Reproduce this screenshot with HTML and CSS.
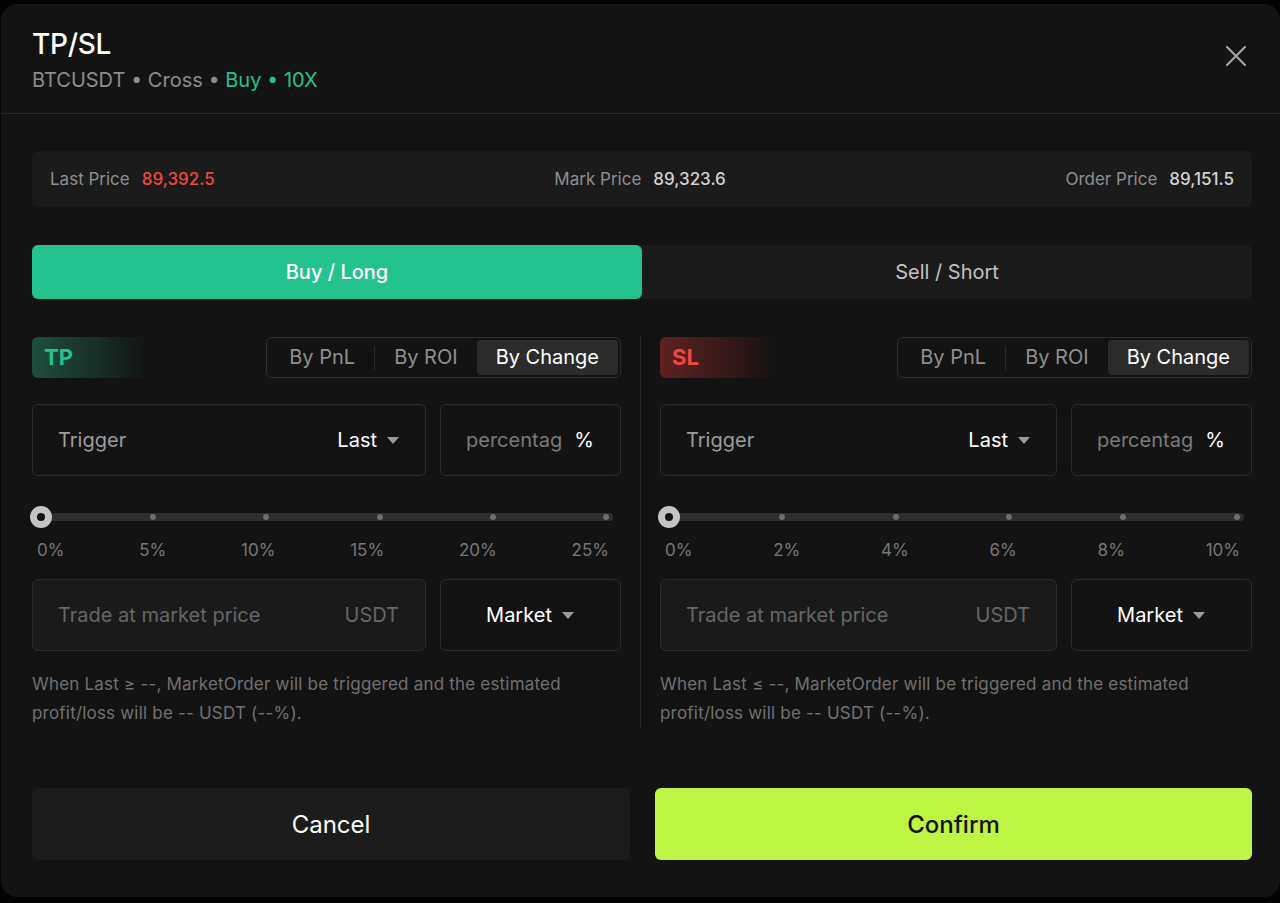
FILE: index.html
```html
<!DOCTYPE html>
<html lang="en">
<head>
    <meta charset="UTF-8">
    <meta name="viewport" content="width=device-width, initial-scale=1.0">
    <title>TP/SL</title>
    <link rel="stylesheet" href="styles.css">
</head>
<body>
    <div class="modal">
        <div class="modal-head">
            <div>
                <h1 class="title">TP/SL</h1>
                <p class="subtitle">BTCUSDT • Cross • <span class="up">Buy • 10X</span></p>
            </div>
            <button class="close" aria-label="Close">
                <svg width="22" height="22" viewBox="0 0 22 22"><path d="M2 2 L20 20 M20 2 L2 20" stroke="#a3a3a3" stroke-width="2.2" stroke-linecap="round"/></svg>
            </button>
        </div>

        <div class="modal-body">
            <!-- prices -->
            <div class="price-bar">
                <div class="price"><span class="label">Last Price</span><span class="value down">89,392.5</span></div>
                <div class="price"><span class="label">Mark Price</span><span class="value">89,323.6</span></div>
                <div class="price"><span class="label">Order Price</span><span class="value">89,151.5</span></div>
            </div>

            <div class="side-tabs">
                <button class="side active">Buy / Long</button>
                <button class="side">Sell / Short</button>
            </div>

            <div class="columns">
                <!-- take profit -->
                <div class="col">
                    <div class="col-head">
                        <span class="tag tag-tp">TP</span>
                        <div class="segment">
                            <span class="seg-item">By PnL</span>
                            <span class="seg-sep"></span>
                            <span class="seg-item">By ROI</span>
                            <span class="seg-item active">By Change</span>
                        </div>
                    </div>
                    <div class="field-row">
                        <div class="field">
                            <span class="muted">Trigger</span>
                            <span class="select">Last <i class="caret"></i></span>
                        </div>
                        <div class="field">
                            <input class="pct-input" type="text" placeholder="percentage">
                            <span class="unit">%</span>
                        </div>
                    </div>
                    <div class="slider">
                        <div class="track">
                            <i class="dot"></i><i class="dot"></i><i class="dot"></i><i class="dot"></i><i class="dot"></i><i class="dot"></i>
                            <span class="knob"></span>
                        </div>
                    </div>
                    <div class="ticks"><span>0%</span><span>5%</span><span>10%</span><span>15%</span><span>20%</span><span>25%</span></div>
                    <div class="field-row">
                        <div class="field filled">
                            <span class="placeholder">Trade at market price</span>
                            <span class="placeholder">USDT</span>
                        </div>
                        <div class="field center">
                            <span class="select">Market <i class="caret"></i></span>
                        </div>
                    </div>
                    <p class="note">When Last ≥ --, MarketOrder will be triggered and the estimated profit/loss will be -- USDT (--%).</p>
                </div>

                <div class="col-divider"></div>

                <!-- stop loss -->
                <div class="col">
                    <div class="col-head">
                        <span class="tag tag-sl">SL</span>
                        <div class="segment">
                            <span class="seg-item">By PnL</span>
                            <span class="seg-sep"></span>
                            <span class="seg-item">By ROI</span>
                            <span class="seg-item active">By Change</span>
                        </div>
                    </div>
                    <div class="field-row">
                        <div class="field">
                            <span class="muted">Trigger</span>
                            <span class="select">Last <i class="caret"></i></span>
                        </div>
                        <div class="field">
                            <input class="pct-input" type="text" placeholder="percentage">
                            <span class="unit">%</span>
                        </div>
                    </div>
                    <div class="slider">
                        <div class="track">
                            <i class="dot"></i><i class="dot"></i><i class="dot"></i><i class="dot"></i><i class="dot"></i><i class="dot"></i>
                            <span class="knob"></span>
                        </div>
                    </div>
                    <div class="ticks"><span>0%</span><span>2%</span><span>4%</span><span>6%</span><span>8%</span><span>10%</span></div>
                    <div class="field-row">
                        <div class="field filled">
                            <span class="placeholder">Trade at market price</span>
                            <span class="placeholder">USDT</span>
                        </div>
                        <div class="field center">
                            <span class="select">Market <i class="caret"></i></span>
                        </div>
                    </div>
                    <p class="note">When Last ≤ --, MarketOrder will be triggered and the estimated profit/loss will be -- USDT (--%).</p>
                </div>
            </div>

            <div class="actions">
                <button class="btn btn-cancel">Cancel</button>
                <button class="btn btn-confirm">Confirm</button>
            </div>
        </div>
    </div>
</body>
</html>
```

FILE: styles.css
```css
/* TP/SL dialog, dark theme */
* { box-sizing: border-box; }
body { margin: 0; background-color: #030303; font-family: Inter, Roboto, sans-serif; color: #fff; }
button { font-family: inherit; border: none; cursor: pointer; }

.modal { width: 1279px; height: 893px; margin: 4px 0 0 1px; background-color: #131313; border-radius: 16px; overflow: hidden; }

.modal-head { height: 110px; padding: 22px 33px 0 31px; border-bottom: 1px solid #272727; display: flex; justify-content: space-between; }
.title { margin: 0; font-size: 28px; line-height: 36px; font-weight: 500; letter-spacing: -0.3px; }
.subtitle { margin: 4px 0 0; font-size: 20px; line-height: 28px; color: #8c8c8c; }
.up { color: #25c28f; }
.down { color: #f2473e !important; }
.close { background: none; padding: 0; width: 22px; height: 22px; margin-top: 19px; }

.modal-body { padding: 37px 28px 0 31px; }

.price-bar { height: 56px; padding: 0 18px; background-color: #1b1b1b; border-radius: 6px; display: flex; align-items: center; justify-content: space-between; font-size: 17px; }
.price .label { color: #8e8e8e; margin-right: 12px; }
.price .value { color: #d2d2d2; font-weight: 500; }

.side-tabs { margin-top: 38px; height: 54px; display: grid; grid-template-columns: 1fr 1fr; background-color: #1b1b1b; border-radius: 6px; }
.side { background: none; color: #c2c2c2; font-size: 20px; border-radius: 6px; }
.side.active { background-color: #24c28f; color: #fff; font-weight: 500; }

.columns { margin-top: 38px; display: grid; grid-template-columns: 589px 1px 1fr; column-gap: 19px; }
.col-divider { background-color: #2a2a2a; }

.col-head { height: 41px; display: flex; justify-content: space-between; }
.tag { width: 118px; padding-left: 12px; border-radius: 6px 0 0 6px; font-size: 22px; font-weight: 700; line-height: 41px; }
.tag-tp { color: #25c28f; background: linear-gradient(90deg, #1e4f3d 0%, rgba(30, 79, 61, 0.55) 45%, rgba(19, 19, 19, 0) 100%); }
.tag-sl { color: #f2473e; background: linear-gradient(90deg, #602220 0%, rgba(96, 34, 32, 0.55) 45%, rgba(19, 19, 19, 0) 100%); }

.segment { display: flex; align-items: center; padding: 2px 2px 2px 3px; border: 1px solid #2f2f2f; border-radius: 6px; }
.seg-item { height: 35px; line-height: 35px; padding: 0 19px; font-size: 20px; color: #8f8f8f; border-radius: 4px; }
.seg-item.active { background-color: #2b2b2c; color: #fff; }
.seg-sep { width: 1px; height: 24px; background-color: #2b2b2b; }

.field-row { margin-top: 26px; display: grid; grid-template-columns: 1fr 181px; gap: 14px; }
.field { height: 72px; padding: 0 26px 0 25px; border: 1px solid #2c2c2c; border-radius: 6px; display: flex; align-items: center; justify-content: space-between; font-size: 20px; gap: 12px; }
.field.filled { background-color: #1a1a1a; }
.field.center { justify-content: center; }
.muted { color: #9c9c9c; }
.placeholder { color: #666; }
.pct-input { width: 100px; min-width: 0; padding: 0; border: none; outline: none; background: none; font-family: inherit; font-size: 20px; color: #fff; }
.pct-input::placeholder { color: #7a7a7a; }
.unit { color: #fff; }
.select { color: #fff; display: flex; align-items: center; }
.caret { width: 0; height: 0; margin-left: 10px; border-left: 6px solid transparent; border-right: 6px solid transparent; border-top: 7px solid #9a9a9a; }

.slider { margin-top: 31px; height: 20px; padding-right: 8px; display: flex; align-items: center; }
.track { position: relative; flex: 1; height: 8px; padding: 0 4px 0 5px; background-color: #2e2e30; border-radius: 4px; display: flex; align-items: center; justify-content: space-between; }
.dot { width: 6px; height: 6px; border-radius: 50%; background-color: #6e6e6e; }
.knob { position: absolute; left: -2px; top: -7px; width: 22px; height: 22px; border-radius: 50%; background-color: #c4c4c4; border: 7px solid #c4c4c4; }
.knob::after { content: ""; display: block; width: 8px; height: 8px; border-radius: 50%; background-color: #121212; }

.ticks { margin-top: 13px; height: 20px; padding: 0 12px 0 5px; display: flex; justify-content: space-between; font-size: 17px; line-height: 20px; color: #777; }
.ticks + .field-row { margin-top: 19px; }

.note { margin: 19px 0 0; font-size: 17px; line-height: 29px; color: #717171; letter-spacing: 0.2px; }

.actions { margin-top: 60px; display: grid; grid-template-columns: 598px 1fr; gap: 25px; }
.btn { height: 72px; border-radius: 6px; font-size: 24px; }
.btn-cancel { background-color: #1c1c1c; color: #fff; }
.btn-confirm { background-color: #bef443; color: #111; font-weight: 500; }
```
